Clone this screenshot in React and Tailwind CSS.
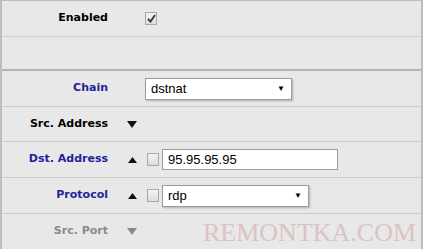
import React from "react";

const labelFont = { fontFamily: '"DejaVu Sans", Verdana, sans-serif' };

function Down({ color = "#111" }) {
  return (
    <svg width="10" height="7" viewBox="0 0 10 7">
      <path d="M0 0 L10 0 L5 7 Z" fill={color} />
    </svg>
  );
}

function Up() {
  return (
    <svg width="9" height="6" viewBox="0 0 9 6">
      <path d="M0 6 L9 6 L4.5 0 Z" fill="#111" />
    </svg>
  );
}

function Box({ checked }) {
  return (
    <div className="flex h-[13px] w-[12px] items-center justify-center border border-[#a9a9a9] bg-gradient-to-b from-[#f4f4f4] to-[#dcdcdc]">
      {checked && (
        <svg width="9" height="9" viewBox="0 0 9 9">
          <path d="M1 5 L3.5 7.5 L8 1" stroke="#333" strokeWidth="1.8" fill="none" />
        </svg>
      )}
    </div>
  );
}

function Select({ value, width }) {
  return (
    <div
      className={`flex h-[22px] ${width} items-center justify-between border border-[#9c9c9c] bg-white pl-[5px] pr-[6px] text-[13px] text-black shadow-[1px_1px_2px_rgba(0,0,0,0.25)]`}
      style={{ fontFamily: '"Liberation Sans", Arial, sans-serif' }}
    >
      <span>{value}</span>
      <span className="text-[8px]">▼</span>
    </div>
  );
}

function Row({ label, color = "text-black", h, children }) {
  return (
    <div className={`flex ${h} items-center`}>
      <div
        className={`w-[106px] text-right text-[11px] font-bold ${color}`}
        style={labelFont}
      >
        {label}
      </div>
      <div className="flex items-center">{children}</div>
    </div>
  );
}

export default function App() {
  return (
    <div className="relative h-[249px] w-[423px] overflow-hidden bg-[#e8e8e8]">
      <div className="h-full border-l-2 border-r-2 border-t border-[#bdbdbd]">
        <Row label="Enabled" h="h-[35px]">
          <div className="ml-[37px]">
            <Box checked />
          </div>
        </Row>
        <div className="h-px bg-[#cdcdcd]" />
        <div className="h-[32px]" />
        <div className="h-[2px] bg-[#b4b4b4]" />
        <Row label="Chain" color="text-[#23239a]" h="h-[35px]">
          <div className="ml-[37px]">
            <Select value="dstnat" width="w-[147px]" />
          </div>
        </Row>
        <div className="h-px bg-[#cdcdcd]" />
        <Row label="Src. Address" h="h-[34px]">
          <div className="ml-[19px]">
            <Down />
          </div>
        </Row>
        <div className="h-px bg-[#cdcdcd]" />
        <Row label="Dst. Address" color="text-[#23239a]" h="h-[35px]">
          <div className="ml-[20px] flex items-center">
            <Up />
            <div className="ml-[10px]">
              <Box />
            </div>
            <div
              className="ml-[3px] flex h-[21px] w-[176px] items-center border border-[#9c9c9c] bg-white pl-[5px] text-[13px] text-black"
              style={{ fontFamily: '"Liberation Sans", Arial, sans-serif' }}
            >
              95.95.95.95
            </div>
          </div>
        </Row>
        <div className="h-px bg-[#cdcdcd]" />
        <Row label="Protocol" color="text-[#23239a]" h="h-[35px]">
          <div className="ml-[20px] flex items-center">
            <Up />
            <div className="ml-[10px]">
              <Box />
            </div>
            <div className="ml-[3px]">
              <Select value="rdp" width="w-[147px]" />
            </div>
          </div>
        </Row>
        <div className="h-px bg-[#cdcdcd]" />
        <Row label="Src. Port" color="text-[#8a8a8a]" h="h-[35px]">
          <div className="ml-[19px]">
            <Down color="#8a8a8a" />
          </div>
        </Row>
      </div>
      <div
        className="absolute left-[203px] top-[220px] text-[26px] leading-none text-[#dcc3c3]"
        style={{ fontFamily: '"Liberation Serif", "Times New Roman", serif' }}
      >
        REMONTKA.COM
      </div>
    </div>
  );
}
